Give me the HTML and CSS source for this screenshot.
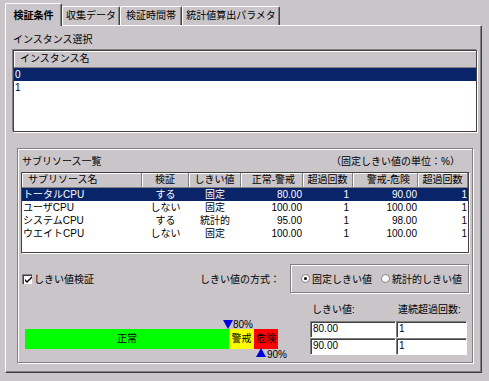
FILE: index.html
```
<html>
    <head>
        <title>検証条件</title>
        <link rel="stylesheet" href="styles.css">
    </head>
    <body>
        <div class="okno">
            <div class="tabs">
                <div class="tab active" style="width:57px">検証条件</div>
                <div class="tab" style="width:58px">収集データ</div>
                <div class="tab" style="width:62px">検証時間帯</div>
                <div class="tab" style="width:98px">統計値算出パラメタ</div>
            </div>
            <div class="panel">
                <div class="label">インスタンス選択</div>
                <div class="list">
                    <div class="list-head">インスタンス名</div>
                    <div class="list-row sel">0</div>
                    <div class="list-row">1</div>
                </div>

                <div class="group">
                    <div class="group-title">
                        <span>サブリソース一覧</span>
                        <span class="unit">（固定しきい値の単位：%）</span>
                    </div>
                    <div class="grid-wrap">
                        <table class="grid">
                            <colgroup>
                                <col style="width:120px"><col style="width:47px"><col style="width:52px">
                                <col style="width:62px"><col style="width:50px"><col style="width:65px"><col style="width:50px">
                            </colgroup>
                            <thead>
                                <tr>
                                    <th class="left">サブリソース名</th>
                                    <th>検証</th>
                                    <th>しきい値</th>
                                    <th class="right">正常-警戒</th>
                                    <th>超過回数</th>
                                    <th class="right">警戒-危険</th>
                                    <th>超過回数</th>
                                </tr>
                            </thead>
                            <tbody>
                                <tr class="sel"><td>トータルCPU</td><td class="mid">する</td><td class="mid">固定</td><td class="num">80.00</td><td class="num cnt">1</td><td class="num">90.00</td><td class="num">1</td></tr>
                                <tr><td>ユーザCPU</td><td class="mid">しない</td><td class="mid">固定</td><td class="num">100.00</td><td class="num cnt">1</td><td class="num">100.00</td><td class="num">1</td></tr>
                                <tr><td>システムCPU</td><td class="mid">する</td><td class="mid">統計的</td><td class="num">95.00</td><td class="num cnt">1</td><td class="num">98.00</td><td class="num">1</td></tr>
                                <tr><td>ウエイトCPU</td><td class="mid">しない</td><td class="mid">固定</td><td class="num">100.00</td><td class="num cnt">1</td><td class="num">100.00</td><td class="num">1</td></tr>
                            </tbody>
                        </table>
                    </div>

                    <div class="opts">
                        <div class="check">
                            <span class="box">
                                <svg width="7" height="7" viewBox="0 0 7 7"><path d="M0 3 L2 5 L7 0 L7 2 L2 7 L0 5 Z" fill="#000"/></svg>
                            </span>
                            しきい値検証
                        </div>
                        <div class="method-label">しきい値の方式：</div>
                        <div class="method">
                            <span class="radio on"></span><span class="r-text">固定しきい値</span>
                            <span class="radio"></span><span class="r-text">統計的しきい値</span>
                        </div>
                    </div>

                    <div class="thresh">
                        <div class="gauge">
                            <div class="tri-down" style="left:198px"></div>
                            <div class="pct" style="left:208px;top:16px">80%</div>
                            <div class="bar">
                                <div class="seg normal" style="width:204px">正常</div>
                                <div class="seg warn" style="width:25px">警戒</div>
                                <div class="seg danger" style="width:24px">危険</div>
                            </div>
                            <div class="tri-up" style="left:231px"></div>
                            <div class="pct" style="left:242px;top:46px">90%</div>
                        </div>
                        <div class="inputs">
                            <div class="in-label">しきい値:</div>
                            <div class="in-label">連続超過回数:</div>
                            <div class="field">80.00</div>
                            <div class="field">1</div>
                            <div class="field">90.00</div>
                            <div class="field">1</div>
                        </div>
                    </div>
                </div>
            </div>
        </div>
    </body>
</html>
```

FILE: styles.css
```
body {
        margin: 0;
        background: #c9c5c9;
        font-family: "Liberation Sans", "Noto Sans CJK JP", sans-serif;
        font-size: 10px;
        color: #000;}

.okno {
        padding: 3px 7px 8px 5px;
        width: 477px;}

.tabs {
        display: flex;
        align-items: flex-end;
        height: 22px;
        position: relative;
        z-index: 1;}

.tab {
        box-sizing: border-box;
        height: 19px;
        line-height: 18px;
        text-align: center;
        border-top: 1px solid #fff;
        border-left: 1px solid #fff;
        border-right: 1px solid #404040;
        box-shadow: inset -1px 0 0 #808080;
        border-radius: 2px 2px 0 0;
        background: #c9c5c9;
        white-space: nowrap;}

.tab.active {
        height: 23px;
        margin-bottom: -1px;
        line-height: 24px;
        font-weight: bold;}

.panel {
        box-sizing: border-box;
        width: 477px;
        height: 348px;
        padding: 7px 0 0 7px;
        border-top: 1px solid #fff;
        border-left: 1px solid #fff;
        border-right: 1px solid #404040;
        border-bottom: 1px solid #404040;
        box-shadow: inset -1px -1px 0 #808080;}

.label {
        line-height: 14px;}

.list {
        box-sizing: border-box;
        margin-top: 3px;
        width: 464px;
        height: 82px;
        background: #fff;
        border: 1px solid #404040;
        box-shadow: -1px -1px 0 #808080, 1px 1px 0 #fff;}

.list-head {
        box-sizing: border-box;
        height: 17px;
        line-height: 16px;
        padding-left: 6px;
        background: #c9c5c9;
        border-bottom: 1px solid #808080;
        box-shadow: inset 1px 1px 0 #fff;}

.list-row {
        height: 13px;
        line-height: 13px;
        padding-left: 1px;}

.list-row.sel {
        background: #0a246a;
        color: #fff;}

.group {
        box-sizing: border-box;
        margin: 16px 0 0 4px;
        width: 456px;
        height: 215px;
        padding: 6px 0 0 0;
        border: 1px solid #808080;
        box-shadow: inset 1px 1px 0 #fff, 1px 1px 0 #fff;}

.group-title {
        display: flex;
        justify-content: space-between;
        line-height: 14px;
        padding: 0 12px 0 4px;
        margin-bottom: 3px;}

.grid-wrap {
        box-sizing: border-box;
        margin-left: 3px;
        width: 448px;
        height: 81px;
        background: #fff;
        border: 1px solid #404040;
        box-shadow: 1px 1px 0 #fff;}

.grid {
        table-layout: fixed;
        width: 446px;
        border-collapse: separate;
        border-spacing: 0;
        font-size: 10px;
        font-family: "Liberation Sans", "Noto Sans CJK JP", sans-serif;}

.grid th {
        box-sizing: border-box;
        height: 15px;
        line-height: 14px;
        padding: 0 2px;
        font-weight: normal;
        text-align: center;
        background: #c9c5c9;
        border-right: 1px solid #808080;
        border-bottom: 1px solid #808080;
        box-shadow: inset 1px 1px 0 #fff;
        white-space: nowrap;
        overflow: hidden;}

.grid th.left {
        text-align: left;
        padding-left: 6px;}

.grid th.right {
        text-align: right;
        padding-right: 7px;}

.grid td {
        height: 13px;
        line-height: 13px;
        padding: 0 1px;
        white-space: nowrap;}

.grid td.mid {text-align: center;}

.grid td.num {
        text-align: right;
        padding-right: 1px;}

.grid td.cnt {padding-right: 4px;}

.grid tr.sel td {
        background: #0a246a;
        color: #fff;}

.opts {
        display: flex;
        align-items: center;
        margin-top: 11px;
        height: 29px;}

.check {
        display: flex;
        align-items: center;
        gap: 2px;
        width: 178px;
        margin-left: 4px;}

.box {
        box-sizing: border-box;
        width: 10px;
        height: 10px;
        background: #fff;
        border-top: 1px solid #808080;
        border-left: 1px solid #808080;
        box-shadow: inset 1px 1px 0 #404040;
        display: flex;
        align-items: center;
        justify-content: center;
        padding: 1px 0 0 1px;}

.method-label {
        width: 90px;
        white-space: nowrap;}

.method {
        box-sizing: border-box;
        display: flex;
        align-items: center;
        width: 179px;
        height: 29px;
        padding-left: 10px;
        border: 1px solid #808080;
        box-shadow: inset 1px 1px 0 #fff, 1px 1px 0 #fff;
        white-space: nowrap;}

.radio {
        box-sizing: border-box;
        flex-shrink: 0;
        width: 9px;
        height: 9px;
        border-radius: 50%;
        background: #fff;
        border: 1px solid #808080;
        position: relative;}

.radio.on::after {
        content: "";
        position: absolute;
        left: 2px;
        top: 2px;
        width: 3px;
        height: 3px;
        border-radius: 50%;
        background: #000;}

.r-text {
        margin: 0 9px 0 2px;}

.thresh {
        display: flex;
        margin-top: 10px;}

.gauge {
        position: relative;
        width: 253px;
        height: 52px;
        margin-left: 7px;}

.bar {
        display: flex;
        margin-top: 26px;
        height: 20px;}

.seg {
        line-height: 20px;
        text-align: center;
        white-space: nowrap;
        overflow: hidden;}

.normal {background: #00ff00;}
.warn {background: #ffff00;}
.danger {background: #ff0000;}

.tri-down {
        position: absolute;
        top: 17px;
        width: 0;
        height: 0;
        border-left: 5px solid transparent;
        border-right: 5px solid transparent;
        border-top: 9px solid #0000e0;}

.tri-up {
        position: absolute;
        top: 45px;
        width: 0;
        height: 0;
        border-left: 5px solid transparent;
        border-right: 5px solid transparent;
        border-bottom: 9px solid #0000e0;}

.pct {
        position: absolute;
        line-height: 12px;}

.inputs {
        display: grid;
        grid-template-columns: 86px 71px;
        grid-template-rows: 18px 17px 17px;
        margin-left: 32px;}

.in-label {
        line-height: 14px;
        padding-left: 2px;}

.field {
        box-sizing: border-box;
        height: 17px;
        line-height: 14px;
        padding-left: 2px;
        background: #fff;
        border: 1px solid;
        border-color: #808080 #fff #fff #808080;
        box-shadow: inset 1px 1px 0 #404040;}
```
